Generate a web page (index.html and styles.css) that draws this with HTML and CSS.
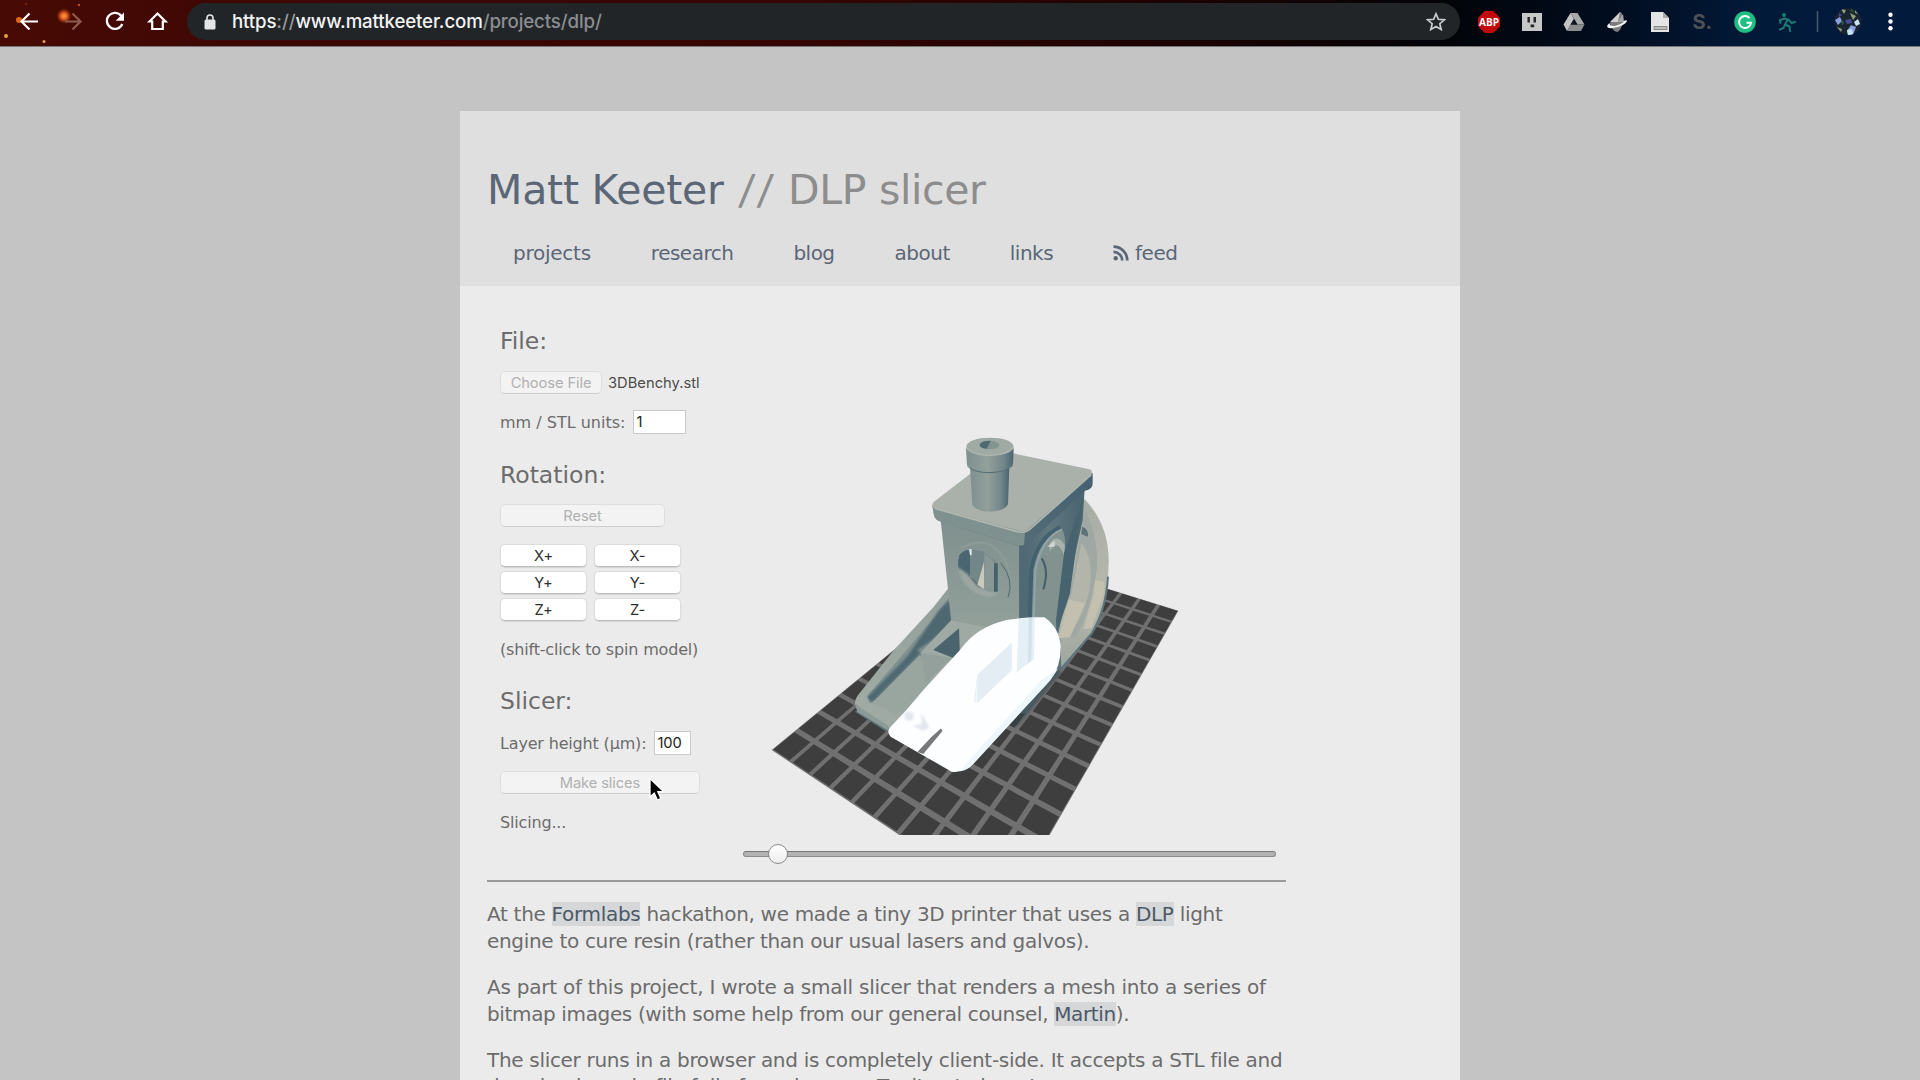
FILE: index.html
```
<!DOCTYPE html>
<html lang="en">
<head>
<meta charset="utf-8">
<title>Matt Keeter // DLP slicer</title>
<link rel="stylesheet" href="styles.css">
</head>
<body>
<header class="toolbar">
  <svg class="nav-icons" width="187" height="46" viewBox="0 0 187 46" fill="none">
    <defs><radialGradient id="spark"><stop offset="0" stop-color="#ffa04a"/><stop offset=".45" stop-color="#d8591a"/><stop offset="1" stop-color="#7a1a05" stop-opacity="0"/></radialGradient></defs>
    <circle cx="64" cy="16" r="8" fill="url(#spark)"/>
    <circle cx="19" cy="20" r="3" fill="#e0661c"/><circle cx="6" cy="36" r="2" fill="#e5a53c"/><circle cx="44" cy="41.500" r="1.500" fill="#e0a050"/><circle cx="79" cy="5" r="1.200" fill="#b8502a"/><circle cx="26" cy="4" r="1" fill="#8a3010"/>
    <path d="M38 21.500H22M29.500 13.500l-8 8 8 8" stroke="#fff" stroke-width="2.200"/>
    <path d="M65 21.500h15M72.500 13.500l8 8-8 8" stroke="#8e5a4c" stroke-width="2.200"/>
    <path d="M121.500 16.300A8 8 0 1 0 122.300 24" stroke="#fff" stroke-width="2.300"/><path d="M124 12.500v8.300h-8.300z" fill="#fff"/>
    <path d="M149.500 21.500l8-8 8 8h-2.700v7.500h-10.600v-7.500z" stroke="#fff" stroke-width="2.200"/>
  </svg>
  <div class="address">
    <svg class="lock" width="12" height="16" viewBox="0 0 12 16"><rect x=".5" y="5.500" width="11" height="10" rx="1.500" fill="#e4e5e7"/><path d="M3 6V4a3 3 0 0 1 6 0v2" fill="none" stroke="#e4e5e7" stroke-width="1.600"/></svg>
    <span class="url"><span class="host">https<i>://</i>www.mattkeeter.com</span><span class="path">/projects/dlp/</span></span>
    <svg class="star" width="20" height="20" viewBox="0 0 20 20"><path d="M10 1.800l2.400 5.500 6 .5-4.600 3.900 1.400 5.900L10 14.500l-5.200 3.100 1.400-5.900-4.600-3.900 6-.5z" fill="none" stroke="#c9cbce" stroke-width="1.700"/></svg>
  </div>
  <div class="extensions">
    <svg width="22" height="22" viewBox="0 0 22 22"><path d="M6.800 0h8.400L22 6.800v8.400L15.200 22H6.800L0 15.200V6.800z" fill="#c2090d"/><text x="11" y="15" class="abp">ABP</text></svg>
    <svg width="20" height="20" viewBox="0 0 20 20"><path d="M0 1h20v18H0z" fill="#c6c7c7"/><path d="M5.500 5h2.400v5.500H5.500zM11.500 5H14v5.500h-2.500zM8.600 12.500h3.600v2.700H8.600z" fill="#25262a"/></svg>
    <svg width="22" height="20" viewBox="0 0 22 20"><path d="M7.500 1h7l7 11.500h-7z" fill="#a8a8a8"/><path d="M7.500 1L.5 12.500 4 19l7-12z" fill="#c2c2c2"/><path d="M21.500 12.500L18 19H4l3.600-6.500z" fill="#8c8c8c"/><path d="M11 7l3.300 5.500H7.600z" fill="#111722"/></svg>
    <svg width="22" height="22" viewBox="0 0 22 22"><path d="M4 12C7 8 10 7 14 1c2 0 3 4 3 9-1 7-4 11-6 11-4-1-6-5-7-9z" fill="#7d7d7d"/><path d="M4 11L14 1l-2 10z" fill="#d0d0d0"/><path d="M12 11l5-8 1 8z" fill="#a5a5a5"/><path d="M4 12c-5 3-3 6 3 5 7-1 13-4 14-7 0-1-2-1-3 0-1 2-5 4-9 5-4 0-6-1-5-3z" fill="#f4f4f4"/></svg>
    <svg width="20" height="22" viewBox="0 0 20 22"><path d="M1 1h12l6 6v14H1z" fill="#e3e4e4"/><path d="M13 1v6h6z" fill="#aaa"/><path d="M4 15.500h13v3H4z" fill="#b9bbbc" stroke="#777" stroke-width=".8"/></svg>
    <span class="ext-s">S.</span>
    <svg width="22" height="22" viewBox="0 0 22 22"><circle cx="11" cy="11" r="10.800" fill="#1fbf83"/><path d="M15.500 7A6 6 0 1 0 17 11.800h-4.500" fill="none" stroke="#fff" stroke-width="1.900"/></svg>
    <svg width="18" height="20" viewBox="0 0 18 20"><circle cx="6" cy="3" r="2" fill="#1a7a74"/><path d="M7 6.500L2 8M7 6.500l4 1.500 2.500 3 3.500-1M9.500 8L7 12.500l4.500 2 .5 4.500M7 12.500L5.500 16 2 17.500M2 8l.5 3" fill="none" stroke="#1a7a74" stroke-width="2" stroke-linecap="round"/></svg>
  </div>
  <svg class="profile" width="104" height="46" viewBox="0 0 104 46">
    <defs><clipPath id="face"><circle cx="32" cy="21.500" r="13.500"/></clipPath></defs>
    <path d="M1.500 11v21" stroke="#47566d" stroke-width="1.600"/>
    <g clip-path="url(#face)"><path d="M18 7h28v29H18z" fill="#1b2530"/><path d="M19 20l5-3 2 4-4 4zM31 31l4-6 5 2-3 8h-5z" fill="#8c9fe0"/><path d="M25 9l5 1-2 4zM34 13l6 3-3 4zM21 27l5 2-1 3zM39 10l3 4-3-1z" fill="#8aa080"/><path d="M29 20l6-1 1 4-5 1zM23 13l3 2-3 2z" fill="#4a4a9a"/><path d="M31 30l5-1 1 6h-5zM38 22l4-3 2 5-4 2z" fill="#c6e4ee"/><path d="M25 20l3 2-2 4zM36 9l2 3-4-1z" fill="#2b6448"/></g>
    <g fill="#fff"><circle cx="74.500" cy="14.700" r="2.200"/><circle cx="74.500" cy="21.500" r="2.200"/><circle cx="74.500" cy="28.300" r="2.200"/></g>
  </svg>
</header>

<main class="page">
  <div class="masthead">
    <h1><a class="name">Matt Keeter</a> <span class="slashes">//</span> DLP slicer</h1>
    <nav>
      <a>projects</a><a>research</a><a>blog</a><a>about</a><a>links</a>
      <a class="feed"><svg width="16" height="16" viewBox="0 0 16 16"><circle cx="2.700" cy="13.300" r="2.200" fill="#5b6777"/><path d="M.5 6.800A8.700 8.700 0 0 1 9.200 15.500M.5 1.700A13.800 13.800 0 0 1 14.300 15.500" fill="none" stroke="#5b6777" stroke-width="2.700"/></svg>feed</a>
    </nav>
  </div>

  <div class="content">
    <div class="app">
      <div class="controls">
        <h3>File:</h3>
        <div class="row file"><button class="btn choose" disabled>Choose File</button><span class="filename">3DBenchy.stl</span></div>
        <div class="row units"><label>mm / STL units:</label><input class="field wide" value="1"></div>
        <h3>Rotation:</h3>
        <button class="btn reset" disabled>Reset</button>
        <div class="axes">
          <button class="btn">X+</button><button class="btn">X-</button>
          <button class="btn">Y+</button><button class="btn">Y-</button>
          <button class="btn">Z+</button><button class="btn">Z-</button>
        </div>
        <div class="row hint">(shift-click to spin model)</div>
        <h3>Slicer:</h3>
        <div class="row layer"><label>Layer height (µm):</label><input class="field" value="100"></div>
        <button class="btn make" disabled>Make slices
          <svg class="cursor" width="18" height="26" viewBox="0 0 18 26"><path d="M2 1.500v18.500l4.300-4 3 7 3.500-1.500-3-6.800h6z" fill="#000" stroke="#fff" stroke-width="1.300"/></svg>
        </button>
        <div class="row status">Slicing...</div>
      </div>

      <div class="viewer">
        <svg class="scene" width="440" height="415" viewBox="0 0 1320 1245">
          <defs>
            <linearGradient id="pipe"><stop offset="0" stop-color="#7e908e"/><stop offset=".45" stop-color="#93a09b"/><stop offset=".8" stop-color="#71858a"/><stop offset="1" stop-color="#4a6470"/></linearGradient>
            <linearGradient id="front" x2="0" y2="1"><stop offset="0" stop-color="#7f908e"/><stop offset="1" stop-color="#94a19b"/></linearGradient>
            <linearGradient id="side" x1="0" x2="1" y1=".6" y2=".4"><stop offset="0" stop-color="#4b6572"/><stop offset=".5" stop-color="#60777f"/><stop offset="1" stop-color="#4b6571"/></linearGradient>
            <linearGradient id="roofside" x1="0" x2="1"><stop offset="0" stop-color="#7f918f"/><stop offset=".25" stop-color="#5d757c"/><stop offset="1" stop-color="#456070"/></linearGradient>
            <linearGradient id="bow" x2="0" y2="1"><stop offset="0" stop-color="#a7aea6"/><stop offset=".6" stop-color="#b8b8ab"/><stop offset="1" stop-color="#9ba59f"/></linearGradient>
            <linearGradient id="deck" x1="0" x2="1" y1="1" y2="0"><stop offset="0" stop-color="#a5aea7"/><stop offset="1" stop-color="#8d9b97"/></linearGradient>
            <filter id="soft"><feGaussianBlur stdDeviation="5"/></filter>
            <filter id="blend"><feGaussianBlur stdDeviation="2.500"/></filter>
          </defs>
          <g id="plate"></g>
          <!-- hull -->
          <path d="M285 875L380 935 520 900 800 880 905 745 1000 640 960 560 800 600 560 650z" fill="#5c7478"/>
          <path d="M565 505L520 562 400 692 292 828Q276 852 296 874L386 924 600 1000 700 640 575 600z" fill="url(#deck)"/>
          <path d="M565 535L525 590 322 828 330 850 400 800 580 605z" fill="#80918f"/>
          <g filter="url(#blend)">
            <path d="M568 540L536 572 440 712 505 668 576 610z" fill="#4e6871"/>
            <path d="M322 832L466 685 482 700 336 848z" fill="#4f6973"/>
          </g>
          <path d="M480 704L336 850 410 882 450 862 510 790z" fill="#99a59f"/>
          <path d="M286 850L292 876 386 932 386 918 300 862z" fill="#8c9b97"/>
          <path d="M482 698L574 600 660 600 700 640 600 720 505 785z" fill="#a0aaa4"/>
          <path d="M482 698l18 90 60-60 36-10z" fill="#93a09b"/>
          <path d="M520 690L597 625 600 712 580 714z" fill="#4a636c"/>
          <!-- bow -->
          <path d="M974 238Q1048 315 1046 430Q1044 560 995 640L904 745 900 640 880 640 900 500 960 250z" fill="url(#bow)"/>
          <path d="M975 268Q1018 360 1010 450Q995 570 948 650L890 655 900 560 930 520z" fill="#9fa8a3"/>
          <path d="M964 370Q1000 410 990 500Q975 590 920 650L890 650 895 600 930 540z" fill="#b3b5aa"/>
          <path d="M926 538L975 550 930 652 896 655z" fill="#c3c0b0"/>
          <path d="M1005 480L1034 485 1030 525 995 625 970 628 1000 530z" fill="#c3c0b0"/>
          <path d="M1044 470Q1038 570 995 640L904 745" fill="none" stroke="#5c767e" stroke-width="6"/>
          <path d="M966 320q20 5 18 30l-20-8z" fill="#5b7277"/>
          <!-- cabin -->
          <path d="M542 300L780 370 780 640 574 602z" fill="url(#front)"/>
          <path d="M778 372L974 205 968 300 895 640 778 640z" fill="url(#side)"/>
          <path d="M778 372L800 360 812 640 778 640z" fill="#4f6975"/>
          <path d="M814 640L817 440Q840 345 902 322Q920 345 914 400L905 560 888 640z" fill="#82938f"/>
          <path d="M868 372Q890 338 914 375L912 405Q890 352 870 395z" fill="#a8b2ac"/>
          <path d="M862 380L884 362 884 380z" fill="#d2d6d4"/>
          <path d="M845 415Q868 450 850 508" fill="none" stroke="#435d69" stroke-width="6"/>
          <path d="M808 640L814 450Q832 350 902 322" fill="none" stroke="#42606e" stroke-width="12"/>
          <path d="M820 640L826 450Q848 350 906 328" fill="none" stroke="#8fa3a9" stroke-width="6"/>
          <path d="M912 400L968 240 930 520 890 640 888 600z" fill="#486370"/>
          <!-- round window -->
          <path d="M604 385Q650 355 694 376Q755 420 752 500L745 533" fill="none" stroke="#8e9c97" stroke-width="6"/>
          <path d="M722 428Q764 480 744 532" fill="none" stroke="#4f676e" stroke-width="3"/>
          <path d="M600 405Q618 382 668 394L714 430 712 517Q690 525 660 504Q590 470 600 405z" fill="#738789"/>
          <path d="M598 406Q612 388 630 390L630 470Q654 486 660 504Q578 474 598 406z" fill="#4b6670"/>
          <path d="M592 440Q612 520 690 532L720 515 690 514 655 502 622 462z" fill="#9ca7a2" filter="url(#blend)"/>
          <path d="M672 425L673 508 652 495z" fill="#c9c9be"/>
          <path d="M673 400L703 425V515L673 506z" fill="#899894"/>
          <path d="M702 430h11v85h-11z" fill="#45616b"/>
          <path d="M627 388h8v18h-5z" fill="#e6e8e7"/>
          <!-- roof -->
          <path d="M517 255L522 285Q524 300 545 306L770 376Q790 380 810 366L975 212Q998 210 998 190V158L790 335z" fill="url(#roofside)"/>
          <path d="M517 255L522 285Q524 300 545 306L770 376Q782 379 792 374L796 326z" fill="#7f918e"/>
          <path d="M520 247L630 162 760 100 985 147Q1002 152 993 164L812 322Q796 338 776 332L528 265Q512 258 520 247z" fill="#a9b1aa"/>
          <path d="M520 258Q524 266 535 268L776 336Q798 340 814 324L994 164" fill="none" stroke="#b1b8b0" stroke-width="5"/>
          <!-- chimney -->
          <path d="M630 140L637 255Q650 275 690 275Q735 273 744 252L748 140z" fill="url(#pipe)"/>
          <path d="M618 85L621 135Q640 158 690 158Q745 156 759 132L761 85z" fill="url(#pipe)"/>
          <path d="M622 138Q640 158 690 158Q740 156 758 136" fill="none" stroke="#566e75" stroke-width="3"/>
          <ellipse cx="690" cy="80" rx="71" ry="27" fill="#a0aaa4"/>
          <path d="M620 84Q640 106 690 106Q742 104 760 84" fill="none" stroke="#afb6af" stroke-width="4"/>
          <ellipse cx="688" cy="75" rx="30" ry="13" fill="#839390"/><path d="M659 75Q662 62 692 62L680 86Q660 84 659 75z" fill="#4f6970"/>
          <!-- projected slice -->
          <path d="M770 920L905 760 890 740 740 900z" fill="#304047" opacity=".5" filter="url(#soft)"/>
          <path d="M388 925Q440 872 490 810L600 690Q650 620 740 600Q800 590 853 592Q895 620 902 675Q904 740 870 780L640 1030Q610 1060 575 1055L482 1002 392 950Q380 940 388 925z" fill="#fcfeff"/>
          <path d="M895 745L870 782 640 1032Q622 1052 600 1054L625 1024 845 780z" fill="#edf6fa"/>
          <path d="M776 597L824 593 822 718 770 756z" fill="#e5eff6"/><path d="M806 594h11l-3 128-10 8z" fill="#d3e3ec"/>
          <path d="M755 668V750L652 850 642 845 652 765z" fill="#e4edf3"/><path d="M652 765L645 850H652z" fill="#f2f7fa"/>
          <path d="M434 880q12-10 26 0v18q-14 8-26-2zM484 880l24 42-18 10-32-15 28-4z" fill="#e1e6ee" filter="url(#blend)"/>
          <path d="M542 926Q550 930 545 936L490 1002 472 996 515 950z" fill="#77797b"/>
        </svg>
        <div class="slider"><div class="knob"></div></div>
      </div>
    </div>
    <hr>
    <div class="text">
      <p>At the <a>Formlabs</a> hackathon, we made a tiny 3D printer that uses a <a>DLP</a> light<br>engine to cure resin (rather than our usual lasers and galvos).</p>
      <p><span class="loose">As part of this project, I wrote a small slicer that renders a mesh into a series of</span><br><span class="tight">bitmap images (with some help from our general counsel, <a>Martin</a>).</span></p>
      <p>The slicer runs in a browser and is completely client-side. It accepts a STL file and<br>downloads a .zip file full of png images. Try it out above!</p>
    </div>
  </div>
</main>
<script src="plate.js"></script>
</body>
</html>
```
FILE: styles.css
```
* { box-sizing: border-box; }
body {
  margin: 0; height: 1080px; overflow: hidden; background: #c4c4c4;
  font-family: "DejaVu Sans", Verdana, sans-serif; color: #6c6c6c;
}
svg { display: block; flex: none; }

/* browser toolbar */
.toolbar {
  height: 47px; display: flex; border-bottom: 1px solid #777;
  background: linear-gradient(90deg, #480a05 0, #3c0704 300px, #350603 800px, #160303 1250px, #020409 1450px, #010c1d 1600px, #021a3a 1760px, #021b3d);
}
.address {
  width: 1273px; height: 37px; margin-top: 3px; padding: 0 14px 0 17px;
  border-radius: 19px; background: #222528; display: flex; align-items: center;
}
.url { margin-left: 16px; flex: 1; font: 500 18.700px Inter, sans-serif; letter-spacing: -.14px; color: #8b8e91; }
.host { color: #f2f3f4; }
.host i { font-style: normal; color: #94979a; }
.star { margin-top: 1px; }
.extensions { margin-left: 8px; height: 43px; display: grid; grid-template-columns: repeat(8, 42.600px); align-items: center; justify-items: center; }
.abp { font: 700 10px "Open Sans", sans-serif; fill: #fff; text-anchor: middle; }
.ext-s { font: 700 20px Inter, sans-serif; color: #4d5055; }
.profile { margin-left: auto; }

/* page card */
.page { width: 1000px; height: 969px; margin: 64px auto 0; background: #ebebeb; }
.masthead { height: 175px; background: #dfdfdf; padding: 55px 0 0 27px; }
h1 { margin: 0; font-size: 41px; font-weight: 400; line-height: 48px; letter-spacing: -.35px; color: #8d8d8d; white-space: nowrap; }
.name { color: #5b6777; letter-spacing: -.22px; }
.slashes { display: inline-block; margin: 0 -1.500px 0 3.500px; transform: skewX(-6deg); letter-spacing: 4.700px; }
nav { display: flex; gap: 60px; margin: 25px 0 0 26px; font-size: 20px; line-height: 28px; letter-spacing: -.5px; color: #5b6777; }
nav a:first-child { letter-spacing: -.25px; }
.feed { display: flex; align-items: center; gap: 6px; }

.content { padding: 0 0 0 27px; }
.app { display: flex; height: 594px; }
.controls { width: 256px; padding: 39px 0 0 13px; font-size: 16px; letter-spacing: -.17px; }
h3 { margin: 0; font-size: 23.500px; font-weight: 400; line-height: 32px; letter-spacing: 0; }
.row { display: flex; align-items: center; height: 24px; white-space: nowrap; }
.btn {
  display: block; height: 23px; padding: 0; border: 1px solid #dcdcdc; border-bottom-color: #bdbdbd; border-radius: 5px;
  background: #fff; color: #303030; font: 14.700px/20px Inter, sans-serif; letter-spacing: -.1px;
  box-shadow: 0 1px 1px rgba(0,0,0,.1);
}
.btn:disabled { background: #f3f3f3; color: #b1b1b1; border-color: #dedede; border-bottom-color: #cecece; box-shadow: none; }
.file { height: 23px; margin-top: 14px; gap: 6px; }
.choose { width: 102px; }
.filename { font: 14.700px Inter, sans-serif; color: #4c4c4c; letter-spacing: .03px; }
.units { margin-top: 16px; gap: 8px; letter-spacing: 0; }
.field { width: 37px; height: 24px; padding: 0 2px; border: 1px solid #c9c9c9; border-radius: 0; background: #fff; font: 14.700px Inter, sans-serif; color: #222; }
.field.wide { width: 53px; }
.units + h3 { margin-top: 25px; }
.reset { width: 165px; margin-top: 13px; }
.axes { display: grid; grid-template-columns: 87px 87px; column-gap: 7px; row-gap: 4px; margin-top: 17px; }
.hint { margin-top: 16px; }
.hint + h3 { margin-top: 24px; }
.layer { margin-top: 14px; gap: 8px; }
.make { width: 200px; margin-top: 16px; position: relative; }
.cursor { position: absolute; left: 147px; top: 5px; }
.status { margin-top: 16px; }

.viewer { padding: 134px 0 0 17px; }
.slider {
  width: 533px; height: 6px; margin: 16px 0 0 -17px; border-radius: 3px; display: flex; align-items: center;
  border: 1px solid #8d8d8d; border-top-color: #777; background: #b3b3b3;
}
.knob { width: 20px; height: 20px; margin-left: 24px; flex: none; border: 1.500px solid #8a8a8a; border-radius: 50%; background: linear-gradient(#fff, #ededed); }
hr { width: 799px; height: 2px; margin: 0; border: 0; background: #9a9a9a; }
.text { padding-top: 19px; font-size: 20px; line-height: 26.670px; letter-spacing: -.31px; }
.text p { margin: 0 0 20px; white-space: nowrap; }
.text p:nth-child(2) { margin-bottom: 19px; }
.text a { background: #d5d7d9; color: #4c5868; }
.loose { letter-spacing: -.24px; }
.tight { letter-spacing: -.36px; }
```
FILE: plate.js
```
// Build plate: a 10 x 15 grid of cells seen in perspective.
const far = [741, 412], right = [1255, 572], near = [744, 1462], left = [35, 990];
const g = -0.148, h = -0.382;

function project(u, v) {
  const w = 1 + g * u + h * v;
  return [0, 1].map(i =>
    (far[i] + u * (right[i] * (1 + g) - far[i]) + v * (left[i] * (1 + h) - far[i])) / w);
}

function quad(u0, v0, u1, v1, fill) {
  const points = [[u0, v0], [u1, v0], [u1, v1], [u0, v1]]
    .map(([u, v]) => project(u, v).map(n => n.toFixed(1)).join(',')).join(' ');
  return `<polygon points="${points}" fill="${fill}"/>`;
}

const cols = 10, rows = 15, line = 0.009;
let cells = quad(0, 0, 1, 1, '#707070');
for (let c = 0; c < cols; c++) {
  for (let r = 0; r < rows; r++) {
    const a = c ? line : 0.003, b = c < cols - 1 ? line : 0.003;
    const t = r ? line * 0.7 : 0.003, d = r < rows - 1 ? line * 0.7 : 0.003;
    cells += quad(c / cols + a, r / rows + t, (c + 1) / cols - b, (r + 1) / rows - d, '#3e3e3e');
  }
}
document.getElementById('plate').innerHTML = cells;
```
